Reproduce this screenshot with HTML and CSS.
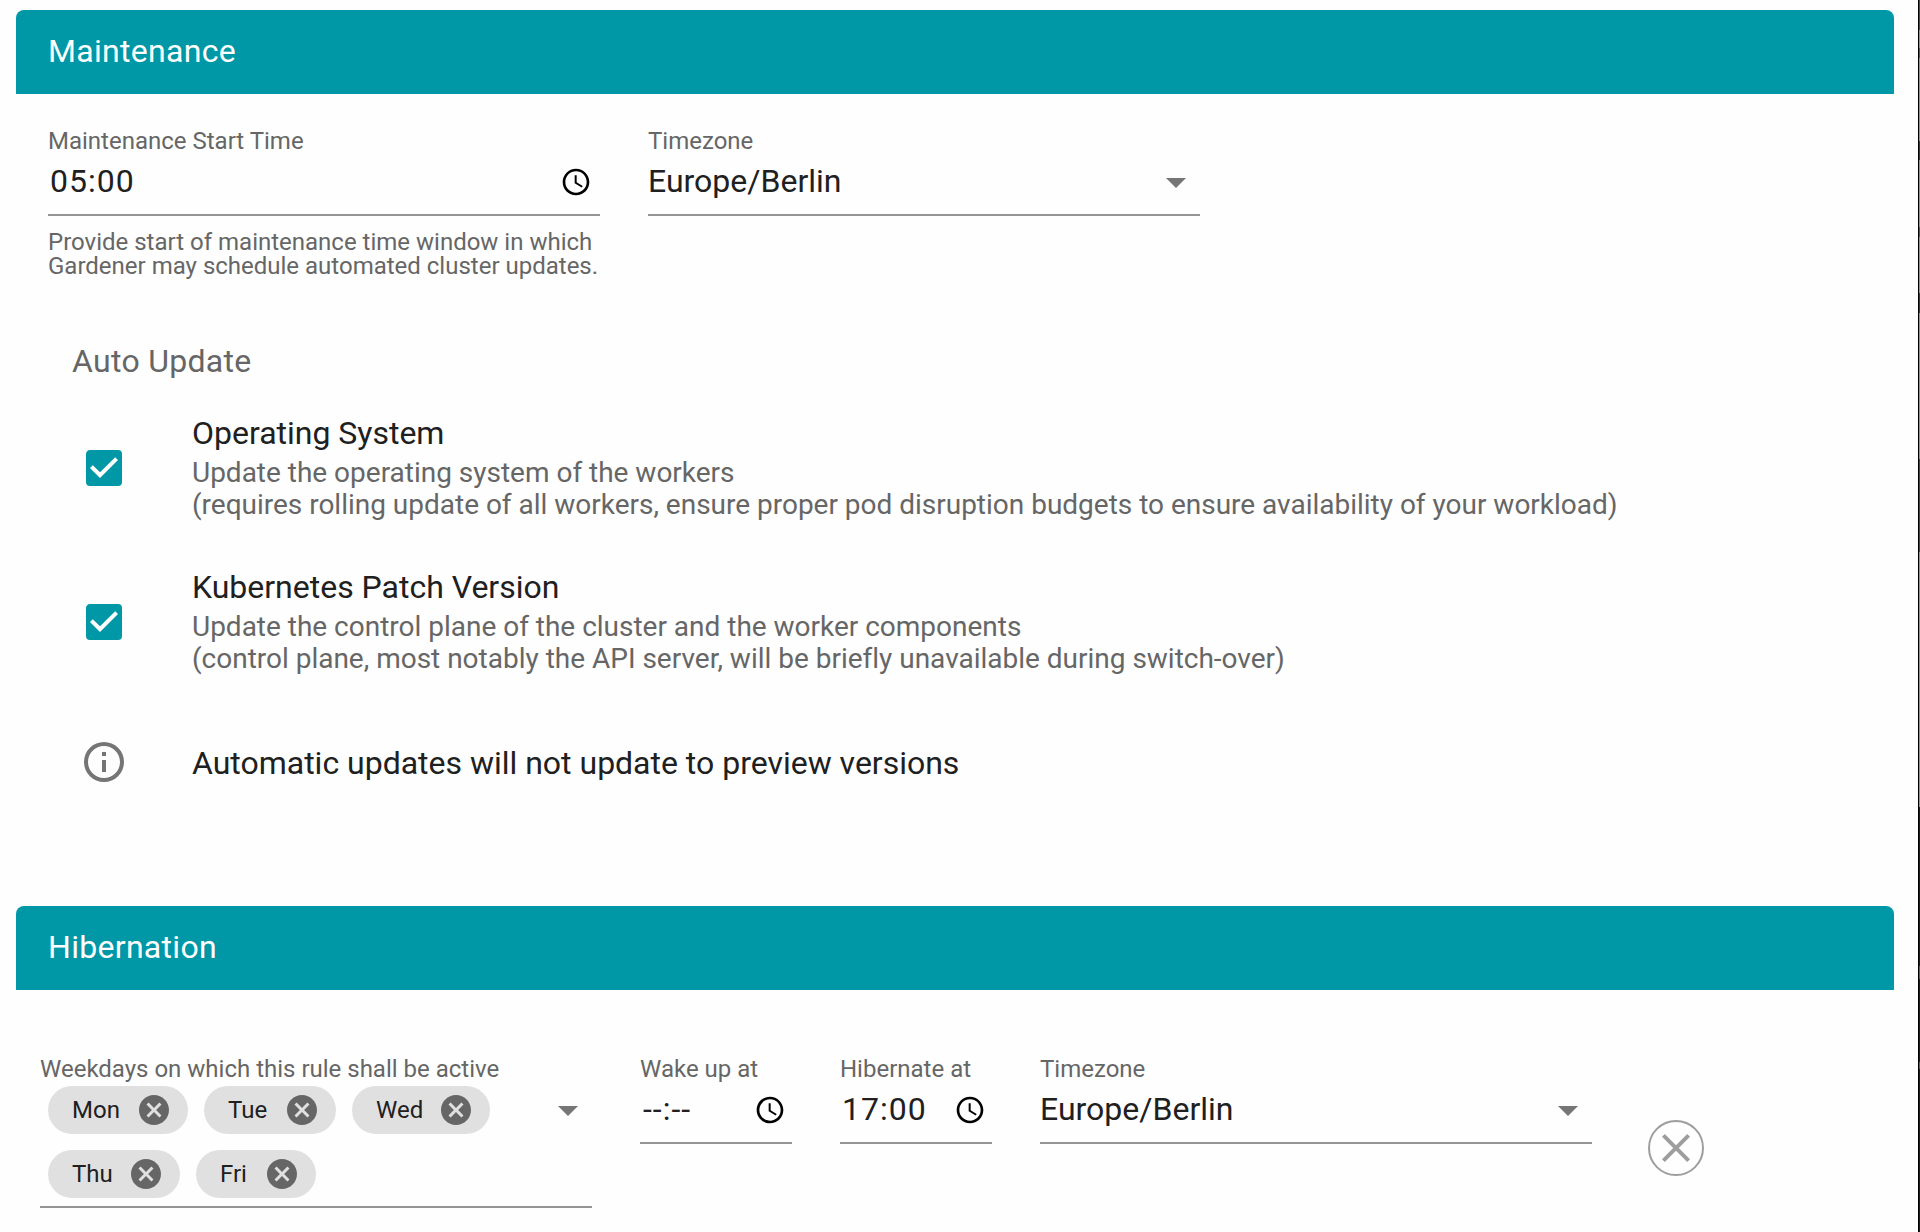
FILE: index.html
```html
<!DOCTYPE html>
<html lang="en">
<head>
<meta charset="utf-8">
<title>Cluster settings</title>
<link rel="stylesheet" href="styles.css">
</head>
<body>
<svg class="defs" width="0" height="0">
  <symbol id="clock" viewBox="0 0 24 24"><path d="M11.99 2C6.47 2 2 6.48 2 12s4.47 10 9.99 10C17.52 22 22 17.52 22 12S17.52 2 11.99 2zM12 20c-4.42 0-8-3.58-8-8s3.58-8 8-8 8 3.58 8 8-3.58 8-8 8zm.5-13H11v6l5.25 3.15.75-1.23-4.5-2.67z"/></symbol>
  <symbol id="caret" viewBox="0 0 24 24"><path d="M7 10l5 5 5-5z"/></symbol>
  <symbol id="check" viewBox="0 0 24 24"><path d="M10 17l-5-5 1.41-1.42L10 14.17l7.59-7.59L19 8m0-5H5c-1.11 0-2 .89-2 2v14a2 2 0 0 0 2 2h14a2 2 0 0 0 2-2V5a2 2 0 0 0-2-2z"/></symbol>
  <symbol id="info" viewBox="0 0 24 24"><path d="M11 9h2V7h-2m1 13c-4.41 0-8-3.59-8-8s3.59-8 8-8 8 3.59 8 8-3.59 8-8 8m0-18A10 10 0 0 0 2 12a10 10 0 0 0 10 10 10 10 0 0 0 10-10A10 10 0 0 0 12 2m-1 15h2v-6h-2v6z"/></symbol>
  <symbol id="cancel" viewBox="0 0 24 24"><path d="M12 2C6.47 2 2 6.47 2 12s4.47 10 10 10 10-4.47 10-10S17.53 2 12 2m5 13.59L15.59 17 12 13.41 8.41 17 7 15.59 10.59 12 7 8.41 8.41 7 12 10.59 15.59 7 17 8.41 13.41 12 17 15.59z"/></symbol>
  <symbol id="close" viewBox="0 0 24 24"><path d="M19 6.41L17.59 5 12 10.59 6.41 5 5 6.41 10.59 12 5 17.59 6.41 19 12 13.41 17.59 19 19 17.59 13.41 12z"/></symbol>
</svg>
<div class="app">
  <main class="page">
    <section class="card maintenance">
      <h2 class="bar">Maintenance</h2>
      <div class="fields">
        <div class="field wide">
          <span class="label">Maintenance Start Time</span>
          <div class="control"><span class="time">05:00</span><svg class="clock"><use href="#clock"/></svg></div>
          <p class="hint">Provide start of maintenance time window in which<br>Gardener may schedule automated cluster updates.</p>
        </div>
        <div class="field wide">
          <span class="label">Timezone</span>
          <div class="control"><span class="value">Europe/Berlin</span><svg class="caret"><use href="#caret"/></svg></div>
        </div>
      </div>
      <h3 class="subheader">Auto Update</h3>
      <ul class="options">
        <li class="option">
          <svg class="check"><use href="#check"/></svg>
          <div class="text"><p class="title">Operating System</p><p class="desc">Update the operating system of the workers<br>(requires rolling update of all workers, ensure proper pod disruption budgets to ensure availability of your workload)</p></div>
        </li>
        <li class="option">
          <svg class="check"><use href="#check"/></svg>
          <div class="text"><p class="title">Kubernetes Patch Version</p><p class="desc">Update the control plane of the cluster and the worker components<br>(control plane, most notably the API server, will be briefly unavailable during switch-over)</p></div>
        </li>
        <li class="option note">
          <svg class="info"><use href="#info"/></svg>
          <p class="title">Automatic updates will not update to preview versions</p>
        </li>
      </ul>
    </section>
    <section class="card">
      <h2 class="bar">Hibernation</h2>
      <div class="fields schedule">
        <div class="field wide">
          <span class="label">Weekdays on which this rule shall be active</span>
          <div class="control days">
            <div class="chips">
              <span class="chip mon">Mon<svg><use href="#cancel"/></svg></span>
              <span class="chip tue">Tue<svg><use href="#cancel"/></svg></span>
              <span class="chip wed">Wed<svg><use href="#cancel"/></svg></span>
              <span class="chip thu">Thu<svg><use href="#cancel"/></svg></span>
              <span class="chip fri">Fri<svg><use href="#cancel"/></svg></span>
            </div>
            <svg class="caret"><use href="#caret"/></svg>
          </div>
        </div>
        <div class="field narrow">
          <span class="label">Wake up at</span>
          <div class="control"><span class="time empty">--:--</span><svg class="clock"><use href="#clock"/></svg></div>
        </div>
        <div class="field narrow">
          <span class="label">Hibernate at</span>
          <div class="control"><span class="time">17:00</span><svg class="clock"><use href="#clock"/></svg></div>
        </div>
        <div class="field wide">
          <span class="label">Timezone</span>
          <div class="control"><span class="value">Europe/Berlin</span><svg class="caret"><use href="#caret"/></svg></div>
        </div>
        <button class="remove" aria-label="Remove schedule"><svg><use href="#close"/></svg></button>
      </div>
    </section>
  </main>
  <div class="edge"></div>
</div>
</body>
</html>
```
FILE: styles.css
```css
* { box-sizing: border-box; margin: 0; padding: 0; }
body { font-family: Roboto, sans-serif; font-size: 32px; color: #202020; background: #fefefe; }
svg { display: block; flex: none; fill: currentColor; }
.defs { position: absolute; }
.app { display: flex; width: 1920px; height: 1232px; overflow: hidden; }
.page { flex: 1; padding: 10px 24px 0 16px; background: #fefefe; }
.edge {
  width: 2px;
  border-left: 1px solid #000;
  background: linear-gradient(#4c4c4a 0 30px, #93938f 30px 48px, #a03c18 48px 58px, #93938f 58px 141px, #3a3a38 141px 160px, #93938f 160px 227px, #a03c18 227px 237px, #93938f 237px 293px, #3a3a38 293px 313px, #93938f 313px 459px, #00626c 459px 552px, #93938f 552px 807px, #1c1c1c 807px 966px, #5c5c5c 966px 979px, #1c1c1c 979px 1062px, #5c5c5c 1062px 1069px, #1c1c1c 1069px);
}
.bar { height: 84px; padding-left: 32px; border-radius: 8px 8px 0 0; background: #0097a7; color: #fff; font-size: 32px; font-weight: 400; line-height: 82px; letter-spacing: 0.3px; }
.maintenance { height: 896px; }
.fields { display: flex; gap: 48px; padding: 31px 0 0 32px; }
.field { display: flex; flex-direction: column; }
.wide { width: 552px; }
.narrow { width: 152px; }
.label { height: 32px; font-size: 24px; line-height: 32px; color: #666; white-space: nowrap; }
.control { display: flex; align-items: center; justify-content: space-between; height: 59px; padding-bottom: 7px; border-bottom: 2px solid #949494; }
.time { padding-left: 2px; letter-spacing: 1px; margin-top: -2px; }
.empty { padding-left: 3px; }
.value { margin-top: -2px; }
.clock { width: 32px; height: 32px; margin-right: 8px; color: #000; }
.narrow .clock { margin-right: 6px; }
.caret { width: 48px; height: 48px; color: #757575; }
.hint { margin-top: 14px; font-size: 24px; line-height: 24px; color: #666; white-space: nowrap; }
.subheader { margin-top: 63px; padding-left: 56px; font-size: 32px; font-weight: 400; line-height: 40px; letter-spacing: 0.3px; color: #666; }
.options { list-style: none; padding: 10px 0 0 64px; }
.option { display: flex; align-items: center; gap: 64px; height: 154px; white-space: nowrap; }
.note { height: 126px; }
.note .title { margin-top: 1px; }
.check { width: 48px; height: 48px; color: #0097a7; }
.info { width: 48px; height: 48px; color: #757575; }
.text { padding-bottom: 2px; }
.title { line-height: 40px; letter-spacing: -0.01px; }
.desc { margin-top: 4px; font-size: 28px; line-height: 32px; letter-spacing: -0.01px; color: #666; }
.schedule { padding: 63px 0 0 24px; }
.days { height: 123px; padding-top: 1px; align-items: flex-start; }
.chips { display: flex; flex-wrap: wrap; gap: 16px; padding-left: 8px; width: 480px; }
.chip { display: flex; align-items: center; justify-content: space-between; height: 48px; padding: 0 16px 0 24px; border-radius: 24px; background: #e0e0e0; font-size: 24px; }
.chip svg { width: 36px; height: 36px; color: #666; }
.mon { width: 140px; }
.tue, .thu { width: 132px; }
.wed { width: 138px; }
.fri { width: 120px; }
.remove { width: 56px; height: 56px; margin: 67px 0 0 8px; border: 2px solid #9e9e9e; border-radius: 50%; background: none; color: #9e9e9e; display: flex; align-items: center; justify-content: center; }
.remove svg { width: 48px; height: 48px; }
```
